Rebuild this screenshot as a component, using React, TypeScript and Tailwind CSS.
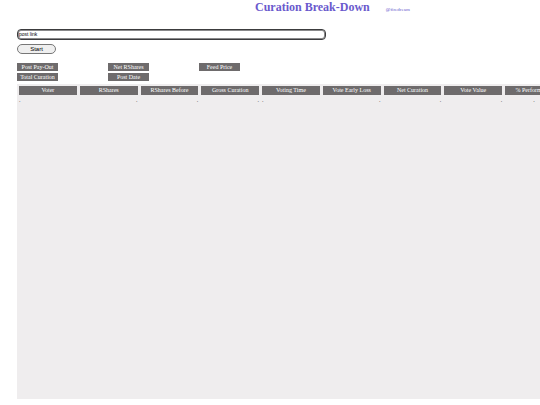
import { useState } from 'react';

interface Column {
  label: string;
  align: string;
}

const COLUMNS: Column[] = [
  { label: 'Voter', align: 'text-left' },
  { label: 'RShares', align: 'text-right' },
  { label: 'RShares Before', align: 'text-right' },
  { label: 'Gross Curation', align: 'text-right' },
  { label: 'Voting Time', align: 'text-left' },
  { label: 'Vote Early Loss', align: 'text-right' },
  { label: 'Net Curation', align: 'text-right' },
  { label: 'Vote Value', align: 'text-right' },
  { label: '% Performance', align: 'text-center' },
];

const SUMMARY = ['Post Pay-Out', 'Net RShares', 'Feed Price', 'Total Curation', 'Post Date'];

function Summary() {
  return (
    <div className="mt-[9px] grid grid-cols-[repeat(3,41px)] gap-x-[50px] gap-y-0.5">
      {SUMMARY.map((label) => (
        <div
          key={label}
          className="h-2 bg-[#6e6b6c] text-center text-[6px] leading-[8px] whitespace-nowrap text-white"
        >
          {label}
        </div>
      ))}
    </div>
  );
}

function VotesTable() {
  return (
    <div className="mt-[3px] h-[calc(100vh-90px)] overflow-hidden bg-[#efedee] pt-0.5">
      <table className="w-[547px] table-fixed border-collapse text-[6px]">
        <thead>
          <tr>
            {COLUMNS.map(({ label }) => (
              <th key={label} className="p-0 pr-px pl-0.5 font-normal">
                <div className="h-[9px] bg-[#6e6b6c] text-center leading-[8px] whitespace-nowrap text-white">
                  {label}
                </div>
              </th>
            ))}
          </tr>
        </thead>
        <tbody>
          {/* Placeholder row until a post is loaded */}
          <tr>
            {COLUMNS.map(({ label, align }) => (
              <td key={label} className={`p-0 pr-px pl-0.5 leading-[11px] text-[#555555] ${align}`}>
                .
              </td>
            ))}
          </tr>
        </tbody>
      </table>
    </div>
  );
}

export default function App() {
  const [link, setLink] = useState('post link');

  return (
    <div className="min-h-screen overflow-hidden bg-white pl-[17px] font-['Liberation_Serif',serif]">
      <header className="flex items-baseline gap-4 pl-[238px] text-[#6a5acd]">
        <h1 className="text-[12px] leading-[14px] font-bold whitespace-nowrap">Curation Break-Down</h1>
        <a href="#firedream" className="text-[5px] leading-[6px]">
          @firedream
        </a>
      </header>

      <form className="mt-[15px] flex flex-col items-start gap-1" onSubmit={(e) => e.preventDefault()}>
        <input
          type="text"
          aria-label="Post link"
          value={link}
          onChange={(e) => setLink(e.target.value)}
          className="h-[11px] w-[309px] rounded-[4px] border border-[#3c3c3e] px-px pb-px font-['Liberation_Sans',sans-serif] text-[5px] leading-[7px] text-black ring-1 ring-[#3c3c3e]/60 outline-none ring-inset"
        />
        <button
          type="submit"
          className="h-[10px] w-[39px] rounded-full border border-[#777777] bg-[#efefef] font-['Liberation_Sans',sans-serif] text-[6px] leading-[8px] text-black"
        >
          Start
        </button>
      </form>

      <Summary />
      <VotesTable />
    </div>
  );
}
